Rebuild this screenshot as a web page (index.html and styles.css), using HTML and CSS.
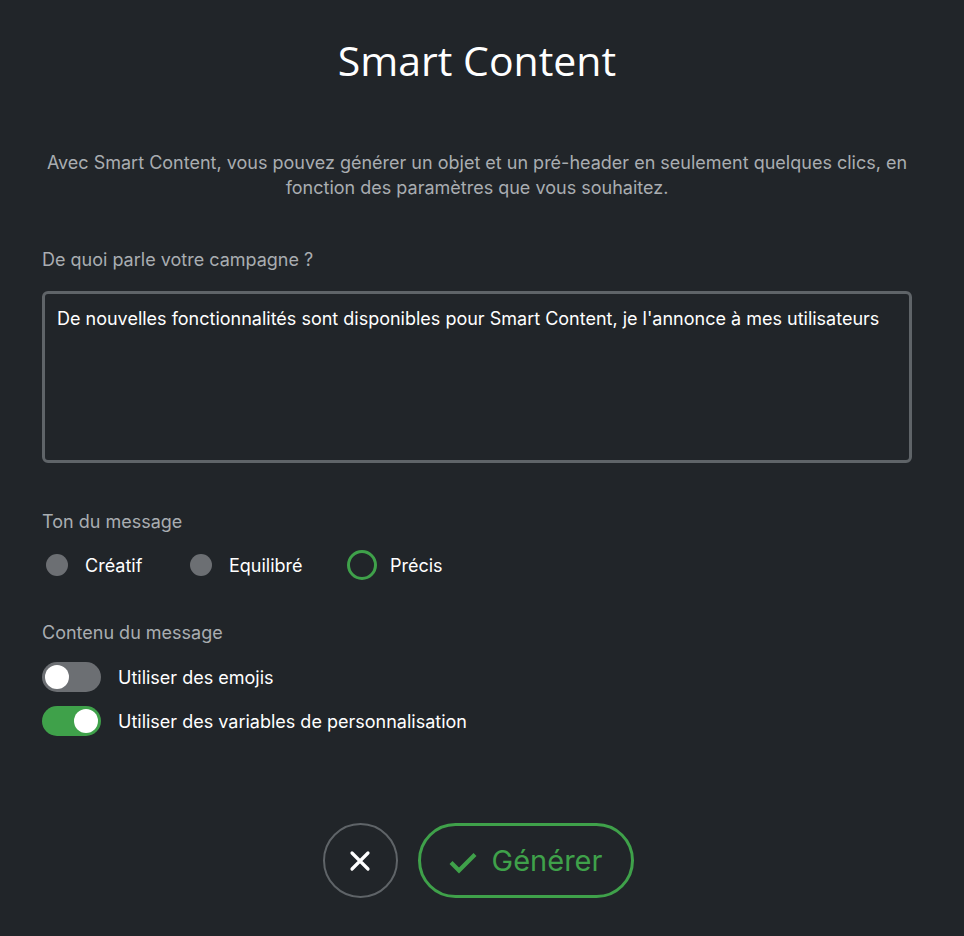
FILE: index.html
```html
<!DOCTYPE html>
<html lang="fr">
<head>
<meta charset="utf-8">
<link rel="stylesheet" href="styles.css">
</head>
<body>
<main class="panel">
  <h1 class="title">Smart Content</h1>
  <p class="intro">Avec Smart Content, vous pouvez générer un objet et un pré-header en seulement quelques clics, en fonction des paramètres que vous souhaitez.</p>

  <label class="label label-topic">De quoi parle votre campagne ?</label>
  <div class="textarea">De nouvelles fonctionnalités sont disponibles pour Smart Content, je l'annonce à mes utilisateurs</div>

  <div class="label label-tone">Ton du message</div>
  <div class="radios">
    <div class="radio"><span class="dot"></span><span>Créatif</span></div>
    <div class="radio"><span class="dot"></span><span>Equilibré</span></div>
    <div class="radio"><span class="dot dot-on"></span><span>Précis</span></div>
  </div>

  <div class="label label-content">Contenu du message</div>
  <div class="toggles">
    <div class="toggle-row"><span class="switch"><span class="knob"></span></span><span>Utiliser des emojis</span></div>
    <div class="toggle-row"><span class="switch switch-on"><span class="knob"></span></span><span>Utiliser des variables de personnalisation</span></div>
  </div>

  <div class="actions">
    <button class="btn-close" aria-label="Fermer">
      <svg width="24" height="24" viewBox="0 0 24 24"><path d="M4 4L20 20M20 4L4 20" stroke="#fff" stroke-width="3.2" stroke-linecap="round"/></svg>
    </button>
    <button class="btn-generate">
      <svg width="28" height="28" viewBox="0 0 28 28"><path d="M2 14.5L10 22.5L26 6.5" fill="none" stroke="#3fa14a" stroke-width="4.2"/></svg>
      <span>Générer</span>
    </button>
  </div>
</main>
</body>
</html>
```
FILE: styles.css
```css
html, body {
  margin: 0;
  padding: 0;
  background: #212529;
}
body {
  font-family: Inter, "Liberation Sans", sans-serif;
  color: #ffffff;
  height: 936px;
  overflow: hidden;
}
.panel {
  width: 870px;
  margin-left: 42px;
  display: flex;
  flex-direction: column;
}
.title {
  margin: 36px 0 0;
  font-family: "Open Sans", sans-serif;
  font-weight: 400;
  font-size: 41px;
  line-height: 48px;
  text-align: center;
  color: #ffffff;
}
.intro {
  margin: 66px 0 0;
  padding: 0 2px;
  font-size: 18px;
  line-height: 25px;
  color: #a9adb1;
  text-align: center;
}
.label {
  font-size: 18px;
  line-height: 22px;
  color: #a9adb1;
}
.label-topic { margin-top: 49px; }
.textarea {
  margin-top: 20px;
  height: 138px;
  border: 3px solid #5f6468;
  border-radius: 6px;
  padding: 14px 12px;
  font-size: 18px;
  line-height: 22px;
  color: #ffffff;
}
.label-tone { margin-top: 48px; }
.radios {
  margin-top: 17px;
  display: flex;
  align-items: center;
  font-size: 18px;
}
.radio {
  display: flex;
  align-items: center;
  gap: 17px;
  height: 30px;
}
.radio:nth-child(1) { width: 147px; padding-left: 4px; box-sizing: border-box; }
.radio:nth-child(2) { width: 154px; padding-left: 1px; box-sizing: border-box; }
.dot {
  width: 22px;
  height: 22px;
  border-radius: 50%;
  background: #6c6f73;
  box-sizing: border-box;
}
.dot-on {
  width: 30px;
  height: 30px;
  background: transparent;
  border: 3px solid #3fa14a;
  margin-left: 4px;
  margin-right: -4px;
}
.label-content { margin-top: 42px; }
.toggles {
  margin-top: 18px;
  display: flex;
  flex-direction: column;
  gap: 14px;
}
.toggle-row {
  display: flex;
  align-items: center;
  gap: 17px;
  font-size: 18px;
  height: 30px;
}
.switch {
  width: 59px;
  height: 30px;
  border-radius: 15px;
  background: #6c6f73;
  position: relative;
  flex: none;
}
.switch .knob {
  position: absolute;
  top: 3px;
  left: 3px;
  width: 24px;
  height: 24px;
  border-radius: 50%;
  background: #fff;
}
.switch-on { background: #3fa14a; }
.switch-on .knob { left: 32px; }
.actions {
  margin-top: 87px;
  display: flex;
  justify-content: center;
  gap: 20px;
  padding-left: 2px;
}
.btn-close {
  width: 75px;
  height: 75px;
  border-radius: 50%;
  border: 2px solid #5f6468;
  background: transparent;
  display: flex;
  align-items: center;
  justify-content: center;
  padding: 0;
}
.btn-generate {
  width: 216px;
  height: 75px;
  border-radius: 38px;
  border: 3px solid #3fa14a;
  background: transparent;
  display: flex;
  align-items: center;
  justify-content: center;
  gap: 15px;
  padding: 0;
  font-family: Inter, "Liberation Sans", sans-serif;
  font-size: 29px;
  color: #3fa14a;
}
.btn-generate svg { margin-top: 2px; }
```
